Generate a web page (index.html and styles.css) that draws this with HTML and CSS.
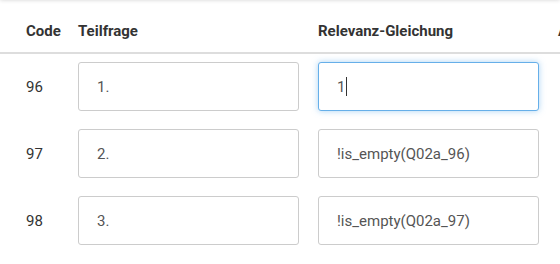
FILE: index.html
```html
<!DOCTYPE html>
<html>
<head>
<meta charset="utf-8">
<link rel="stylesheet" href="styles.css">
</head>
<body>
<div class="topbar"></div>
<div class="table">
  <div class="row head">
    <div class="c code">Code</div>
    <div class="c">Teilfrage</div>
    <div class="c">Relevanz-Gleichung</div>
    <div class="c">Aktion</div>
  </div>
  <div class="row">
    <div class="c code">96</div>
    <div class="c"><input class="inp" value="1."></div>
    <div class="c"><div class="inp focus">1<span class="caret"></span></div></div>
    <div class="c"></div>
  </div>
  <div class="row">
    <div class="c code">97</div>
    <div class="c"><input class="inp" value="2."></div>
    <div class="c"><input class="inp" value="!is_empty(Q02a_96)"></div>
    <div class="c"></div>
  </div>
  <div class="row">
    <div class="c code">98</div>
    <div class="c"><input class="inp" value="3."></div>
    <div class="c"><input class="inp" value="!is_empty(Q02a_97)"></div>
    <div class="c"></div>
  </div>
</div>
</body>
</html>
```
FILE: styles.css
```css
html, body { margin: 0; padding: 0; background: #fff; overflow: hidden; }
body { font-family: Roboto, "Noto Sans", sans-serif; color: #333; width: 560px; height: 264px; position: relative; }
.topbar { position: absolute; left: 0; right: 0; top: -10px; height: 10px; box-shadow: 0 0 4px rgba(0,0,0,0.18); }
.table { display: flex; flex-direction: column; }
.row { display: grid; grid-template-columns: 33px 221px 221px 60px; column-gap: 19px; padding: 8px 0 10px 26px; align-items: center; }
.row.head { height: 54px; box-sizing: border-box; padding-top: 0; padding-bottom: 0; border-bottom: 2px solid #ddd; font-weight: 700; font-size: 15px; color: #333; }
.head .c { padding-top: 10px; white-space: nowrap; }
.c { font-size: 15px; color: #333; }
.inp { display: flex; align-items: center; box-sizing: border-box; width: 221px; height: 49px; border: 1px solid #ccc; border-radius: 3px; padding: 0 18px; font-family: Roboto, "Noto Sans", sans-serif; font-size: 15px; color: #555; background: #fff; outline: none; margin: 0; }
.inp.focus { border-color: #66afe9; box-shadow: 0 0 6px rgba(102,175,233,0.55); }
.caret { display: inline-block; width: 1px; height: 19px; background: #333; margin-left: 1px; }
```
